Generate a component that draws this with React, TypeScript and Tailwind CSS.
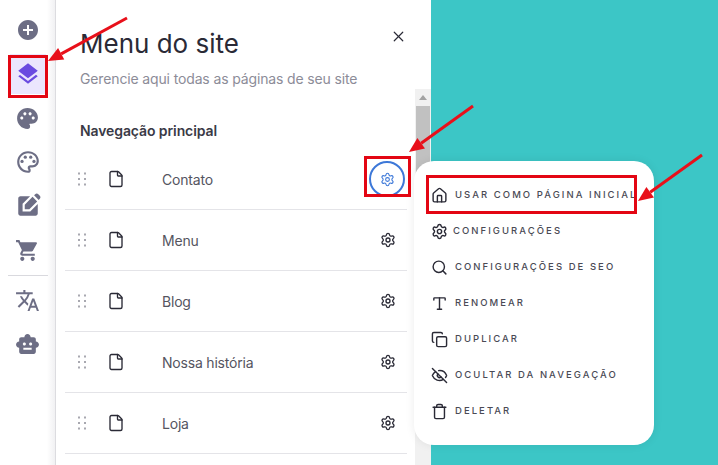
import React from 'react';
import { Settings, Search, Type, EyeOff, Trash, X, File, House, Copy } from 'lucide-react';
import { MdAddCircle, MdLayers, MdPalette, MdOutlinePalette, MdEditSquare, MdShoppingCart, MdTranslate, MdSmartToy } from 'react-icons/md';

const sidebarIcons = [
    { Icon: MdAddCircle, size: 24 },
    { Icon: MdLayers, size: 26, active: true },
    { Icon: MdPalette, size: 25 },
    { Icon: MdOutlinePalette, size: 26 },
    { Icon: MdEditSquare, size: 26 },
    { Icon: MdShoppingCart, size: 25 },
];

const pages = ['Contato', 'Menu', 'Blog', 'Nossa história', 'Loja'];

const menuItems = [
    { label: 'USAR COMO PÁGINA INICIAL', Icon: House },
    { label: 'CONFIGURAÇÕES', Icon: Settings, tight: true },
    { label: 'CONFIGURAÇÕES DE SEO', Icon: Search },
    { label: 'RENOMEAR', Icon: Type },
    { label: 'DUPLICAR', Icon: Copy },
    { label: 'OCULTAR DA NAVEGAÇÃO', Icon: EyeOff },
    { label: 'DELETAR', Icon: Trash },
];

const DragDots = () => (
    <svg width="10" height="16" viewBox="0 0 10 16" fill="#a8a8b0">
        {[1.5, 7, 12.5].map(y => [1, 7].map(x => <rect key={`${x}-${y}`} x={x} y={y} width="2" height="2" />))}
    </svg>
);

const Arrow = ({ x1, y1, x2, y2 }: { x1: number; y1: number; x2: number; y2: number }) => {
    const a = Math.atan2(y2 - y1, x2 - x1);
    const len = 15;
    const w = 6.5;
    const bx = x2 - Math.cos(a) * len;
    const by = y2 - Math.sin(a) * len;
    const px = -Math.sin(a) * w;
    const py = Math.cos(a) * w;
    return (
        <g>
            <line x1={x1} y1={y1} x2={bx} y2={by} stroke="#e8101a" strokeWidth="3" />
            <polygon points={`${x2},${y2} ${bx + px},${by + py} ${bx - px},${by - py}`} fill="#e8101a" />
        </g>
    );
};

const App: React.FC = () => {
    return (
        <div className="relative flex h-[465px] w-[718px] overflow-hidden bg-white font-['Inter',sans-serif]">
            {/* Left icon rail */}
            <aside className="flex h-full w-[56px] shrink-0 flex-col items-center border-r border-[#dcdce0] bg-gradient-to-r from-white from-[85%] to-[#f1f1f3] pt-[8px]">
                {sidebarIcons.map(({ Icon, size, active }, i) => (
                    <div key={i} className="flex h-[44px] w-full items-center justify-center">
                        <div className={`flex h-[40px] w-[36px] items-center justify-center ${active ? 'bg-[#ebe6fd] text-[#6a4be0]' : 'text-[#6d6e85]'}`}>
                            <Icon size={size} />
                        </div>
                    </div>
                ))}
                <div className="mt-[3px] mb-[2px] h-px w-[40px] bg-[#d9d9de]" />
                <div className="flex h-[44px] w-full items-center justify-center text-[#6d6e85]"><MdTranslate size={25} /></div>
                <div className="flex h-[44px] w-full items-center justify-center text-[#6d6e85]"><MdSmartToy size={25} /></div>
            </aside>

            {/* Site menu panel */}
            <section className="relative flex h-full w-[375px] shrink-0 flex-col bg-white">
                <div className="flex items-start justify-between pt-[27px] pr-[24px] pl-[24px]">
                    <h1 className="text-[26px] leading-[34px] font-normal text-[#2a2a36]">Menu do site</h1>
                    <X size={17} strokeWidth={1.7} className="mt-[1px] text-[#2a2a36]" />
                </div>
                <p className="mt-[9px] pl-[24px] text-[14px] leading-[18px] tracking-[-0.14px] text-[#8c8c98]">Gerencie aqui todas as páginas de seu site</p>
                <h2 className="mt-[34px] pl-[24px] text-[14px] leading-[18px] font-semibold tracking-[-0.1px] text-[#3a3a46]">Navegação principal</h2>

                <ul className="mt-[9px] ml-[9px] w-[342px]">
                    {pages.map((page, i) => (
                        <li key={page} className="flex h-[61px] items-center border-b border-[#e4e4e8] pr-[10px] pl-[12px]">
                            <DragDots />
                            <File size={18} strokeWidth={1.8} className="ml-[20px] text-[#2a2a36]" />
                            <span className="ml-[37px] flex-1 text-[14px] tracking-[-0.2px] text-[#55555f]">{page}</span>
                            {i === 0 ? (
                                <span className="-mr-[8px] flex h-[36px] w-[36px] items-center justify-center rounded-full border-2 border-[#3d78d8] text-[#3d78d8]">
                                    <Settings size={15} strokeWidth={1.7} />
                                </span>
                            ) : (
                                <Settings size={16} strokeWidth={2} className="mr-[1px] text-[#2a2a36]" />
                            )}
                        </li>
                    ))}
                </ul>

                {/* Scrollbar */}
                <div className="absolute top-[89px] right-0 bottom-0 flex w-[16px] flex-col items-center bg-[#f1f1f1]">
                    <div className="mt-[6px] h-0 w-0 border-x-[4px] border-b-[5px] border-x-transparent border-b-[#a3a3a3]" />
                    <div className="mt-[6px] h-[90px] w-[14px] bg-[#c1c1c1]" />
                </div>
            </section>

            {/* Site preview */}
            <main className="flex-1 bg-[#3cc6c6]" />

            {/* Popup menu */}
            <div className="absolute top-[161px] left-[414px] w-[240px] rounded-[20px] bg-white pt-[16px] pb-[16px] pl-[17px] shadow-[0_0_10px_rgba(0,0,0,0.08)]">
                {menuItems.map(({ label, Icon, tight }) => (
                    <div key={label} className="flex h-[36px] items-center">
                        <Icon size={17} strokeWidth={2} className="shrink-0 text-[#2a2a36]" />
                        <span className={`${tight ? 'ml-[5px]' : 'ml-[7px]'} text-[9.5px] font-medium tracking-[2.05px] whitespace-nowrap text-[#4a4a55]`}>{label}</span>
                    </div>
                ))}
            </div>

            {/* Tutorial annotations */}
            <div className="absolute top-[55px] left-[8px] h-[43px] w-[40px] border-[3px] border-[#e30613]" />
            <div className="absolute top-[156px] left-[364px] h-[41px] w-[47px] border-[3px] border-[#e30613]" />
            <div className="absolute top-[175px] left-[426px] h-[39px] w-[211px] border-[3px] border-[#e30613]" />
            <svg className="pointer-events-none absolute inset-0" width="718" height="465">
                <Arrow x1={127} y1={18} x2={48} y2={61} />
                <Arrow x1={473} y1={106} x2={409} y2={152} />
                <Arrow x1={702} y1={155} x2={638} y2={201} />
            </svg>
        </div>
    );
};

export default App;
